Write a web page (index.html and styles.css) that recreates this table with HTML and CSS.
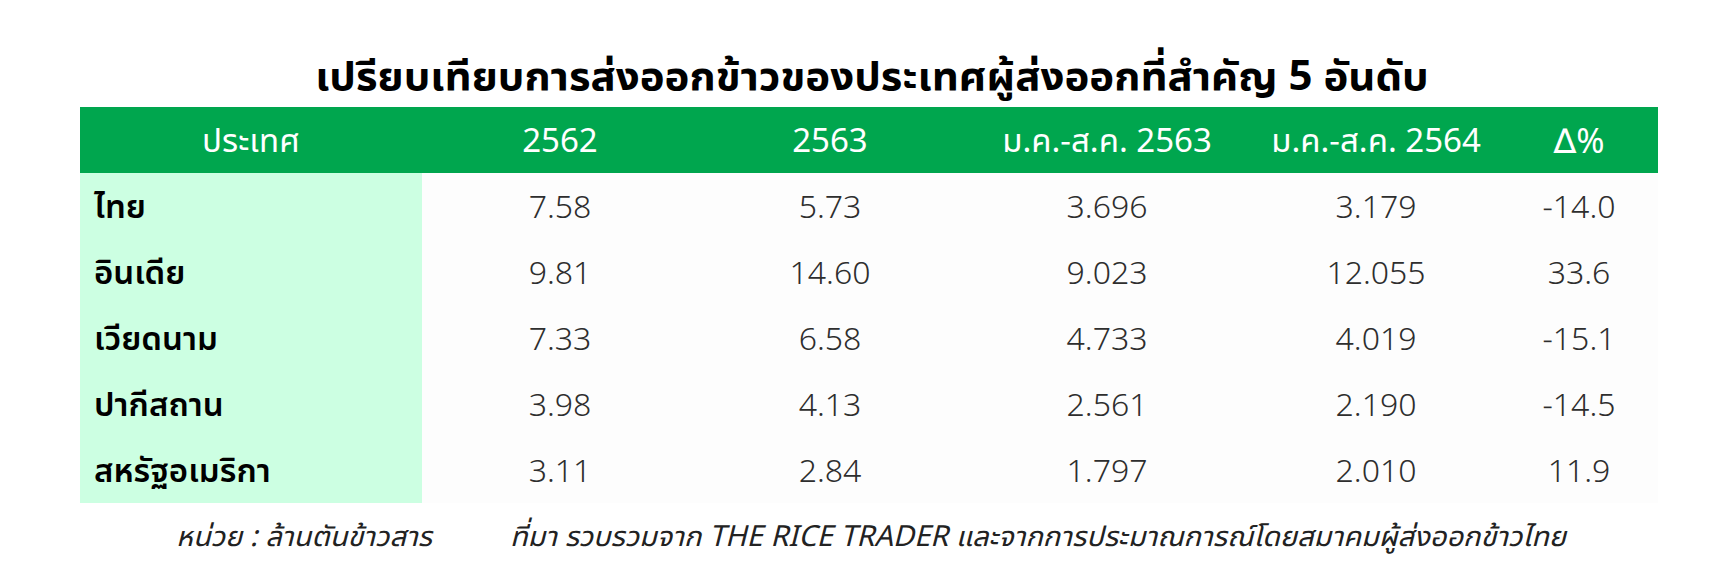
FILE: index.html
```html
<!DOCTYPE html>
<html lang="th">
<head>
<meta charset="utf-8">
<link rel="stylesheet" href="styles.css">
</head>
<body>
<div class="page">
  <h1 class="title">เปรียบเทียบการส่งออกข้าวของประเทศผู้ส่งออกที่สำคัญ 5 อันดับ</h1>
  <div class="table">
    <div class="row head">
      <div class="cell c1">ประเทศ</div>
      <div class="cell">2562</div>
      <div class="cell">2563</div>
      <div class="cell">ม.ค.-ส.ค. 2563</div>
      <div class="cell">ม.ค.-ส.ค. 2564</div>
      <div class="cell delta">∆%</div>
    </div>
    <div class="row">
      <div class="cell name">ไทย</div>
      <div class="cell">7.58</div><div class="cell">5.73</div><div class="cell">3.696</div><div class="cell">3.179</div><div class="cell">-14.0</div>
    </div>
    <div class="row">
      <div class="cell name">อินเดีย</div>
      <div class="cell">9.81</div><div class="cell">14.60</div><div class="cell">9.023</div><div class="cell">12.055</div><div class="cell">33.6</div>
    </div>
    <div class="row">
      <div class="cell name">เวียดนาม</div>
      <div class="cell">7.33</div><div class="cell">6.58</div><div class="cell">4.733</div><div class="cell">4.019</div><div class="cell">-15.1</div>
    </div>
    <div class="row">
      <div class="cell name">ปากีสถาน</div>
      <div class="cell">3.98</div><div class="cell">4.13</div><div class="cell">2.561</div><div class="cell">2.190</div><div class="cell">-14.5</div>
    </div>
    <div class="row">
      <div class="cell name">สหรัฐอเมริกา</div>
      <div class="cell">3.11</div><div class="cell">2.84</div><div class="cell">1.797</div><div class="cell">2.010</div><div class="cell">11.9</div>
    </div>
  </div>
  <p class="note"><span class="unit">หน่วย : ล้านตันข้าวสาร</span><span>ที่มา รวบรวมจาก THE RICE TRADER และจากการประมาณการณ์โดยสมาคมผู้ส่งออกข้าวไทย</span></p>
</div>
</body>
</html>
```

FILE: styles.css
```css
* { box-sizing: border-box; }
html, body { margin: 0; padding: 0; background: #ffffff; }
body {
  font-family: "Noto Sans Thai UI", "Noto Sans Thai", "Noto Sans", "DejaVu Sans", sans-serif;
  color: #333;
}
.page {
  width: 1728px;
  height: 580px;
  padding-top: 50px;
  display: flex;
  flex-direction: column;
  align-items: flex-start;
}
.title {
  margin: 0;
  align-self: center;
  height: 57px;
  line-height: 48px;
  font-size: 42px;
  font-weight: 700;
  color: #000;
  padding-left: 16px;
}
.table {
  margin-left: 80px;
  width: 1578px;
  display: flex;
  flex-direction: column;
  background: #fdfdfd;
}
.row {
  display: grid;
  grid-template-columns: 342px 276px 264px 290px 248px 158px;
  height: 66px;
  align-items: center;
}
.row.head {
  background: #00a64e;
}
.cell {
  text-align: center;
  font-size: 32px;
  font-weight: 300;
  color: #2e2e2e;
  height: 66px;
  line-height: 66px;
}
.head .cell { color: #fff; font-size: 33px; font-weight: 400; }
.head .delta { font-size: 34px; }
.name {
  text-align: left;
  padding-left: 14px;
  font-weight: 600;
  color: #000;
  background: #ccffe2;
  font-size: 33px;
}
.note {
  margin: 12px 0 0;
  font-style: italic;
  font-size: 29px;
  color: #222;
  padding-left: 176px;
  white-space: nowrap;
}
.note .unit { margin-right: 78px; }
```
